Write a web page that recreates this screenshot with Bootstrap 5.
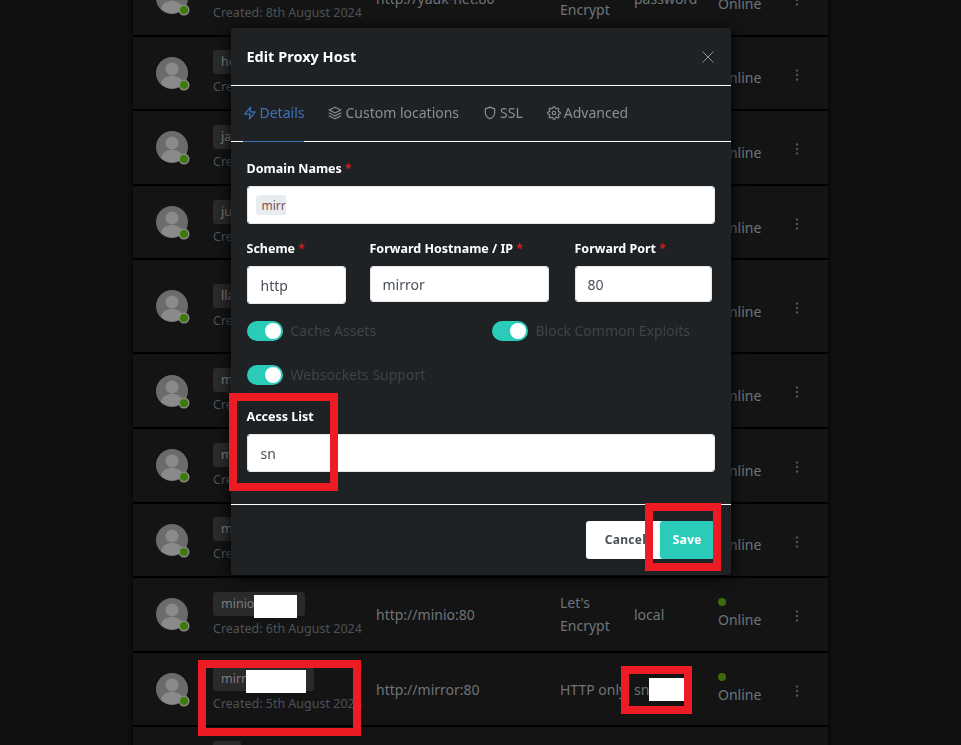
<!DOCTYPE html>
<html lang="en">
<head>
  <meta charset="UTF-8" />
  <meta name="viewport" content="width=device-width, initial-scale=1" />
  <title>Edit Proxy Host</title>
  <link href="https://cdn.jsdelivr.net/npm/bootstrap@5.3.3/dist/css/bootstrap.min.css" rel="stylesheet">
  <style>
    html, body { height: 100%; overflow: hidden; }
    body {
      background-color: #0f1111;
      font-family: "Noto Sans", "Open Sans", sans-serif;
      font-size: 14px;
      color: #6e7479;
    }
    .hosts-card {
      width: 695px;
      margin-left: 133px;
      margin-top: -38px;
      background: #141415;
      box-shadow: 0 0 6px #000;
    }
    .host-row {
      display: grid;
      grid-template-columns: 80px 163px 184px 74px 84px 77px 33px;
      align-items: center;
      border-bottom: 2px solid #000;
      height: 74.6px;
      line-height: 23px;
    }
    .host-row.tall { height: 94px; }
    .avatar-wrap { position: relative; width: 32px; height: 32px; margin-left: 23px; }
    .host-tag {
      display: inline-block;
      background: #2a2a2b;
      color: #7b7e82;
      border-radius: 3px;
      font-size: 12.5px;
      line-height: 18px;
      padding: 3px 8px;
      height: 24px;
    }
    .host-created { font-size: 12.5px; color: #4d5259; line-height: 18px; margin-top: 4px; }
    .status-dot { display: block; width: 8px; height: 8px; background: #3d6a0b; border-radius: 50%; margin-bottom: 2px; }
    .redact { display: inline-block; background: #fff; vertical-align: top; }

    .modal-content {
      background: #1e2225;
      border: 0;
      border-radius: 3px;
      box-shadow: 0 2px 14px #000;
    }
    .modal-header { border-bottom: 1px solid #fff; padding: 0 16px; height: 58px; }
    .modal-title { font-size: 14.5px; font-weight: 700; color: #fff; }
    .tab-bar { border-bottom: 1px solid #fff; height: 56px; padding-left: 12px; gap: 24px; }
    .tab-bar .nav-link {
      padding: 0;
      height: 56px;
      line-height: 54px;
      color: #8b8f94;
      font-size: 14px;
      margin-bottom: -1px;
    }
    .tab-bar .nav-link.active { color: #3f73b6; border-bottom: 1px solid #3f73b6; }
    .tab-bar svg { width: 14px; height: 14px; vertical-align: -2px; margin-right: 3px; }
    .modal-body { padding: 18px 16px 0; height: 362px; }
    .form-label { color: #fff; font-size: 12.5px; font-weight: 700; margin-bottom: 8px; line-height: 18px; display: block; }
    .req { color: #cd201f; }
    .form-control {
      border-radius: 3px;
      height: 38px;
      font-size: 14px;
      color: #495057;
      padding: 6px 13px;
      border: 1px solid #e4e6e9;
    }
    .form-control.slim { height: 36px; margin-top: 1px; padding: 6px 12px; }
    .domain-tag {
      width: 96px;
      height: 20px;
      background: #e9ecef;
      border-radius: 3px;
      color: #7a4f5a;
      font-size: 12px;
      line-height: 22px;
      padding-left: 6px;
    }
    .domain-mask { position: absolute; left: 30px; top: 4px; width: 66px; height: 26px; background: #fff; }
    .toggle-track {
      width: 36px;
      height: 20px;
      background: #2bcbba;
      border-radius: 10px;
      position: relative;
      flex: none;
    }
    .toggle-track::after {
      content: "";
      position: absolute;
      right: 2px;
      top: 2px;
      width: 16px;
      height: 16px;
      background: #fff;
      border-radius: 50%;
    }
    .toggle-text { color: #3e4349; font-size: 14px; line-height: 20px; margin-left: 8px; }
    .modal-footer { border-top: 1px solid #fff; padding: 16px; height: 71px; gap: 0; justify-content: flex-end; }
    .modal-footer .btn { margin: 0; height: 38px; font-size: 12px; font-weight: 700; letter-spacing: .3px; border-radius: 3px; border: 0; }
    .btn-cancel { background: #fff; color: #495057; width: 80px; }
    .btn-save { background: #2bcbba; color: #fff; width: 55px; margin-left: -6px !important; position: relative; }

    /* annotations drawn on top of the screenshot */
    .mark-box { position: fixed; border: 8px solid #ed1c24; z-index: 2000; }
    .mark-white { position: fixed; background: #fff; z-index: 1000; }
  </style>
</head>
<body>

<div class="hosts-card" id="hostRows"></div>

<div class="modal d-block" tabindex="-1">
  <div class="modal-dialog">
    <div class="modal-content">
      <div class="modal-header">
        <h5 class="modal-title">Edit Proxy Host</h5>
        <svg width="14" height="14" viewBox="0 0 14 14" fill="none" stroke="#8b8f94" stroke-width="1"><path d="M1.5 1.5l11 11M12.5 1.5l-11 11"/></svg>
      </div>
      <ul class="nav tab-bar">
        <li class="nav-item"><a class="nav-link active" href="#">
          <svg viewBox="0 0 24 24" fill="none" stroke="currentColor" stroke-width="2" stroke-linejoin="round"><polygon points="13 2 3 14 12 14 11 22 21 10 12 10 13 2"/></svg>Details</a></li>
        <li class="nav-item"><a class="nav-link" href="#">
          <svg viewBox="0 0 24 24" fill="none" stroke="currentColor" stroke-width="2" stroke-linejoin="round" stroke-linecap="round"><polygon points="12 2 2 7 12 12 22 7 12 2"/><polyline points="2 17 12 22 22 17"/><polyline points="2 12 12 17 22 12"/></svg>Custom locations</a></li>
        <li class="nav-item"><a class="nav-link" href="#">
          <svg viewBox="0 0 24 24" fill="none" stroke="currentColor" stroke-width="2" stroke-linejoin="round"><path d="M12 22s8-4 8-10V5l-8-3-8 3v7c0 6 8 10 8 10z"/></svg>SSL</a></li>
        <li class="nav-item"><a class="nav-link" href="#">
          <svg viewBox="0 0 24 24" fill="none" stroke="currentColor" stroke-width="2"><circle cx="12" cy="12" r="3"/><path d="M19.4 15a1.65 1.65 0 0 0 .33 1.82l.06.06a2 2 0 0 1 0 2.83 2 2 0 0 1-2.83 0l-.06-.06a1.65 1.65 0 0 0-1.82-.33 1.65 1.65 0 0 0-1 1.51V21a2 2 0 0 1-2 2 2 2 0 0 1-2-2v-.09A1.65 1.65 0 0 0 9 19.4a1.65 1.65 0 0 0-1.82.33l-.06.06a2 2 0 0 1-2.83 0 2 2 0 0 1 0-2.83l.06-.06a1.65 1.65 0 0 0 .33-1.82 1.65 1.65 0 0 0-1.51-1H3a2 2 0 0 1-2-2 2 2 0 0 1 2-2h.09A1.65 1.65 0 0 0 4.6 9a1.65 1.65 0 0 0-.33-1.82l-.06-.06a2 2 0 0 1 0-2.83 2 2 0 0 1 2.83 0l.06.06a1.65 1.65 0 0 0 1.82.33H9a1.65 1.65 0 0 0 1-1.51V3a2 2 0 0 1 2-2 2 2 0 0 1 2 2v.09a1.65 1.65 0 0 0 1 1.51 1.65 1.65 0 0 0 1.82-.33l.06-.06a2 2 0 0 1 2.83 0 2 2 0 0 1 0 2.83l-.06.06a1.65 1.65 0 0 0-.33 1.82V9a1.65 1.65 0 0 0 1.51 1H21a2 2 0 0 1 2 2 2 2 0 0 1-2 2h-.09a1.65 1.65 0 0 0-1.51 1z"/></svg>Advanced</a></li>
      </ul>
      <div class="modal-body">
        <label class="form-label">Domain Names <span class="req">*</span></label>
        <div class="form-control position-relative mb-3 d-flex align-items-center" style="padding:0 8px">
          <div class="domain-tag">mirr</div>
          <div class="domain-mask" style="left:38px"></div>
        </div>
        <div class="d-flex">
          <div style="width:99px"><label class="form-label">Scheme <span class="req">*</span></label><input class="form-control" value="http"></div>
          <div style="width:179px;margin-left:24px"><label class="form-label">Forward Hostname / IP <span class="req">*</span></label><input class="form-control slim" value="mirror"></div>
          <div style="width:137px;margin-left:26px"><label class="form-label">Forward Port <span class="req">*</span></label><input class="form-control slim" value="80"></div>
        </div>
        <div class="d-flex" style="margin-top:17px">
          <div class="d-flex" style="width:245px"><span class="toggle-track"></span><span class="toggle-text">Cache Assets</span></div>
          <div class="d-flex"><span class="toggle-track"></span><span class="toggle-text">Block Common Exploits</span></div>
        </div>
        <div class="d-flex" style="margin-top:24px"><span class="toggle-track"></span><span class="toggle-text">Websockets Support</span></div>
        <label class="form-label" style="margin-top:23px">Access List</label>
        <input class="form-control" value="sn">
      </div>
      <div class="modal-footer">
        <button class="btn btn-cancel">Cancel</button>
        <button class="btn btn-save">Save</button>
      </div>
    </div>
  </div>
</div>

<div class="mark-box" style="left:229px;top:393px;width:109px;height:98px"></div>
<div class="mark-box" style="left:645px;top:503px;width:76px;height:68px"></div>
<div class="mark-box" style="left:198px;top:660px;width:163px;height:76px"></div>
<div class="mark-box" style="left:621px;top:666px;width:71px;height:48px"></div>

<script>
  const hosts = [
    { tag: 'yauk', white: 0, date: '8th August 2024', url: 'http://yauk-net:80', ssl: "Let's Encrypt", access: 'password' },
    { tag: 'he', white: 0, date: '8th August 2024', url: '', ssl: '', access: '' },
    { tag: 'ja', white: 0, date: '8th August 2024', url: '', ssl: '', access: '' },
    { tag: 'ju', white: 0, date: '8th August 2024', url: '', ssl: '', access: '' },
    { tag: 'lla', white: 0, date: '8th August 2024', url: '', ssl: '', access: '', tall: true },
    { tag: 'm', white: 0, date: '8th August 2024', url: '', ssl: '', access: '' },
    { tag: 'm', white: 0, date: '8th August 2024', url: '', ssl: '', access: '' },
    { tag: 'm', white: 0, date: '8th August 2024', url: '', ssl: '', access: '' },
    { tag: 'minio', white: 43, date: '6th August 2024', url: 'http://minio:80', ssl: "Let's Encrypt", access: 'local' },
    { tag: 'mirr', white: 60, date: '5th August 2024', url: 'http://mirror:80', ssl: 'HTTP only', access: 'sn', accessWhite: 38 },
    { tag: 'm', white: 0, date: '5th August 2024', url: '', ssl: '', access: '' }
  ];

  const avatar = `<svg width="34" height="34" viewBox="0 0 34 34"><circle cx="16" cy="16" r="16" fill="#6b6b6b"/><circle cx="16" cy="12" r="6.5" fill="#8a8a8a"/><path d="M5 27c1-6 6-8 11-8s10 2 11 8a16 16 0 0 1-22 0z" fill="#8a8a8a"/><circle cx="28" cy="28" r="5.5" fill="#8a8a8a"/><circle cx="28" cy="28" r="4" fill="#3d7a0b"/></svg>`;
  const dots = `<svg width="4" height="12" viewBox="0 0 4 12" fill="#4a4f55"><circle cx="2" cy="1.5" r="1.3"/><circle cx="2" cy="6" r="1.3"/><circle cx="2" cy="10.5" r="1.3"/></svg>`;

  document.getElementById('hostRows').innerHTML = hosts.map(h => `
    <div class="host-row${h.tall ? ' tall' : ''}">
      <div><div class="avatar-wrap">${avatar}</div></div>
      <div>
        <span class="host-tag">${h.tag}${h.white ? `<span class="redact" style="width:${h.white}px;height:23px"></span>` : ''}</span>
        <div class="host-created">Created: ${h.date}</div>
      </div>
      <div>${h.url}</div>
      <div>${h.ssl}</div>
      <div>${h.access}${h.accessWhite ? `<span class="redact" style="width:${h.accessWhite}px;height:23px"></span>` : ''}</div>
      <div><span class="status-dot"></span>Online</div>
      <div>${dots}</div>
    </div>`).join('');
</script>
<script src="https://cdn.jsdelivr.net/npm/bootstrap@5.3.3/dist/js/bootstrap.bundle.min.js"></script>
</body>
</html>
